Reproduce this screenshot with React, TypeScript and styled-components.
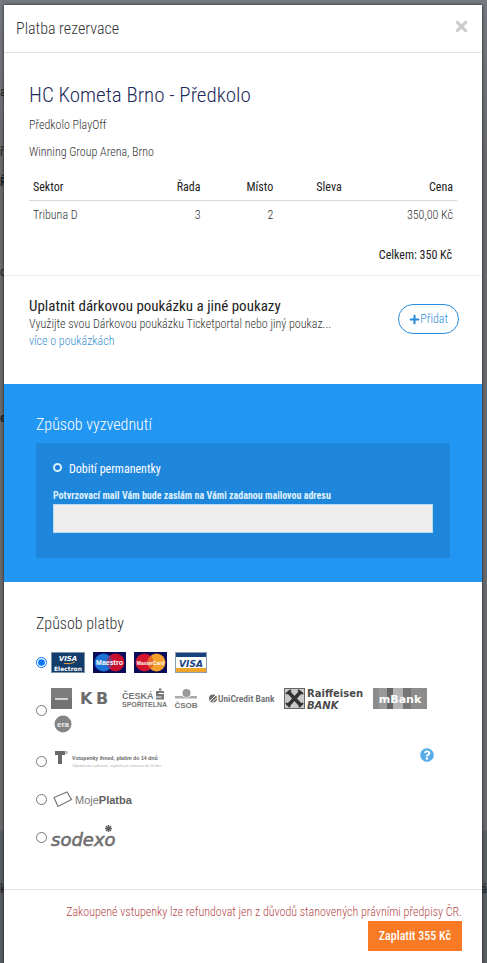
import React from "react";
import styled, { createGlobalStyle } from "styled-components";
import { FaPlus, FaQuestionCircle, FaTimes } from "react-icons/fa";

const GlobalStyle = createGlobalStyle`
  *, *::before, *::after { box-sizing: border-box; }
  body {
    margin: 0;
    background: #6c7077;
    color: #333;
    font-family: "Roboto Condensed", Roboto, "Liberation Sans", sans-serif;
    font-size: 12px;
    font-weight: 300;
    line-height: 18px;
  }
  h1, h2, h3, p, ul { margin: 0; padding: 0; font-weight: inherit; }
  button, input { font: inherit; }
`;

const Page = styled.div`
  position: relative;
  min-height: 100vh;
  padding: 5px 5px 1px 4px;
  overflow: hidden;
  background: linear-gradient(#757980 0, #686a6d 160px, #686a6d 830px, #585d62 832px, #585d62 100%);
`;

const Behind = styled.span<{ $top: number; $side: "left" | "right"; $bold?: boolean }>`
  position: absolute;
  top: ${(p) => p.$top}px;
  ${(p) => p.$side}: 0;
  color: #20242a;
  font-weight: ${(p) => (p.$bold ? 700 : 400)};
`;

const Dialog = styled.section`
  position: relative;
  background: #fff;
  box-shadow: 0 0 3px rgba(0, 0, 0, 0.75);
`;

const Header = styled.header`
  display: flex;
  align-items: center;
  justify-content: space-between;
  height: 48px;
  padding: 0 12px 0 12px;
  border-bottom: 1px solid #e2e2e2;
`;

const DialogTitle = styled.h1`
  font-size: 16px;
  line-height: 24px;
`;

const CloseButton = styled.button`
  display: flex;
  padding: 0;
  border: 0;
  background: none;
  color: #ccc;
  font-size: 17px;
  margin-bottom: 4px;
`;

const Order = styled.div`
  padding: 28px 25px 11px;
  border-bottom: 1px solid #e9eef3;
`;

const EventTitle = styled.h2`
  color: #1d2a5b;
  font-size: 21px;
  line-height: 28px;
  margin-bottom: 7px;
`;

const EventLine = styled.p`
  margin-bottom: 9px;
`;

const Seats = styled.table`
  width: 100%;
  margin-top: 17px;
  border-collapse: collapse;
  table-layout: fixed;
`;

const Head = styled.th<{ $w: number; $left?: boolean }>`
  width: ${(p) => p.$w}%;
  padding: 0 4px 4px;
  border-bottom: 1px solid #d5d9dd;
  color: #222;
  font-weight: 400;
  text-align: ${(p) => (p.$left ? "left" : "right")};
`;

const Cell = styled.td<{ $left?: boolean }>`
  padding: 5px 4px;
  text-align: ${(p) => (p.$left ? "left" : "right")};
`;

const Total = styled.p`
  margin-top: 17px;
  padding-right: 5px;
  color: #222;
  font-weight: 400;
  text-align: right;
`;

const Voucher = styled.div`
  display: flex;
  align-items: flex-start;
  justify-content: space-between;
  padding: 21px 23px 34px 25px;
  line-height: 17px;
`;

const VoucherTitle = styled.h3`
  color: #222;
  font-size: 15px;
  font-weight: 400;
  line-height: 19px;
`;

const MoreLink = styled.a`
  color: #3b8fd0;
  text-decoration: none;
`;

const AddButton = styled.button`
  display: flex;
  align-items: center;
  flex-shrink: 0;
  height: 30px;
  margin-top: 7px;
  padding: 0 10px;
  border: 1px solid #2a8cdc;
  border-radius: 15px;
  background: #fff;
  color: #2a8cdc;
`;

const Pickup = styled.div`
  padding: 29px 32px 24px;
  background: #2196f3;
  color: #fff;
`;

const SectionTitle = styled.h2`
  font-size: 16px;
  line-height: 24px;
`;

const PickupBox = styled.div`
  margin-top: 6px;
  padding: 17px 17px 25px;
  background: #1f87db;
`;

const PickupOption = styled.label`
  display: flex;
  align-items: center;
  gap: 7px;
  font-weight: 400;
`;

const RingRadio = styled.input`
  appearance: none;
  width: 9px;
  height: 9px;
  margin: 0 0 3px;
  border: 2px solid #d8f2ff;
  border-radius: 50%;
  background: #1976e0;
`;

const MailLabel = styled.label`
  display: block;
  margin-top: 11px;
  font-size: 10px;
  font-weight: 700;
  line-height: 14px;
  color: #dff1ff;
`;

const MailInput = styled.input`
  display: block;
  width: 100%;
  height: 29px;
  margin-top: 1px;
  padding: 0 8px;
  border: 1px solid #b9dcf6;
  border-radius: 0;
  background: #eee;
`;

const Payment = styled.div`
  padding: 30px 32px 40px;
`;

const Methods = styled.ul`
  display: grid;
  gap: 15px;
  margin-top: 16px;
  list-style: none;
`;

const Method = styled.li`
  display: flex;
  align-items: center;
  min-height: 21px;
`;

const MethodRadio = styled.input`
  flex-shrink: 0;
  width: 11px;
  height: 11px;
  margin: 0 4px 0 0;
`;

const Logos = styled.label`
  display: flex;
  flex: 1;
  flex-wrap: wrap;
  gap: 6px 8px;

  svg {
    display: block;
    overflow: visible;
  }
`;

const HelpButton = styled.button`
  display: flex;
  margin: 0 16px 12px 0;
  padding: 0;
  border: 0;
  background: none;
  color: #56ace9;
  font-size: 14px;
`;

const Footer = styled.footer`
  display: flex;
  flex-direction: column;
  align-items: flex-end;
  padding: 13px 20px 12px;
  border-top: 1px solid #e2e2e2;
`;

const Notice = styled.p`
  color: #b5484a;
`;

const PayButton = styled.button`
  height: 30px;
  padding: 0 11px;
  border: 0;
  background: #f97a24;
  color: #fff;
  font-weight: 500;
`;

const sans = "Liberation Sans, sans-serif";
const heavy = "DejaVu Sans, sans-serif";

const VisaElectron = () => (
  <svg width="34" height="21" role="img" aria-label="Visa Electron">
    <rect x=".5" y=".5" width="33" height="20" fill="#123d6b" stroke="#7990a5" />
    <text x="17" y="9" textAnchor="middle" fontFamily={heavy} fontSize="7" fontWeight="700" fontStyle="italic" fill="#fff">VISA</text>
    <path d="M13 11.5q7 1 11-1.5" stroke="#e5a43c" fill="none" />
    <text x="17" y="18.500" textAnchor="middle" fontFamily={heavy} fontSize="6" fontWeight="700" fill="#fff">Electron</text>
  </svg>
);

const Circles = ({ name, left, right, size }: { name: string; left: string; right: string; size: number }) => (
  <svg width="33" height="21" role="img" aria-label={name}>
    <rect width="33" height="21" fill="#0b0b5c" />
    <circle cx="22.500" cy="10.500" r="9" fill={right} />
    <circle cx="10.500" cy="10.500" r="9" fill={left} />
    <path d="M16.500 3.800a9 9 0 0 1 0 13.400a9 9 0 0 1 0-13.400" fill={right} opacity=".6" />
    <text x="16.500" y="13" textAnchor="middle" fontFamily={sans} fontSize={size} fontWeight="700" fill="#fff">{name}</text>
  </svg>
);

const Visa = () => (
  <svg width="32" height="21" role="img" aria-label="Visa">
    <rect x=".5" y=".5" width="31" height="20" fill="#fff" stroke="#8e9bb0" />
    <rect x="1" y="1" width="30" height="4" fill="#17427f" />
    <rect x="1" y="16" width="30" height="4" fill="#efa42c" />
    <text x="16" y="14.500" textAnchor="middle" fontFamily={heavy} fontSize="9" fontWeight="700" fontStyle="italic" fill="#17427f">VISA</text>
  </svg>
);

const SquareBank = () => (
  <svg width="21" height="21" role="img" aria-label="Komerční banka">
    <rect width="21" height="21" fill="#737373" />
    <rect width="21" height="10" fill="#7d7d7d" />
    <rect x="4" y="10" width="13" height="2" fill="#d4d4d4" />
  </svg>
);

const Kb = () => (
  <svg width="31" height="21">
    <text x="0" y="16" fontFamily={heavy} fontSize="16" fontWeight="700" fill="#6b6b6b">K</text>
    <text x="16" y="16" fontFamily={heavy} fontSize="16" fontWeight="700" fill="#6b6b6b">B</text>
  </svg>
);

const Sporitelna = () => (
  <svg width="47" height="21" fill="#777">
    <text x="3" y="11" fontFamily={sans} fontSize="9" fontWeight="700">ČESKÁ</text>
    <text x="3" y="19" fontFamily={sans} fontSize="7" fontWeight="700">SPOŘITELNA</text>
    <path d="M37.500 3h7.500v2h-5.500v1h5.500v5.500h-8V9.500h5.500V8.500h-5.500V3zM40 .5h2.500v2H40z" />
  </svg>
);

const Csob = () => (
  <svg width="24" height="21" fill="#777">
    <circle cx="12.500" cy="5" r="4" fill="#999" />
    <path d="M1 8h7q4.500 3 9 0h6v2.500H1z" fill="#aaa" />
    <text x="12" y="19.500" textAnchor="middle" fontFamily={sans} fontSize="8" fontWeight="700">ČSOB</text>
  </svg>
);

const UniCredit = () => (
  <svg width="70" height="21" fill="#707070">
    <circle cx="7" cy="10.500" r="4" />
    <path d="M4 13L10.500 6.500M6 14.500L11 9.500" stroke="#fff" />
    <text x="12" y="14" fontFamily="Roboto Condensed, sans-serif" fontSize="9.500" fontWeight="600">UniCredit Bank</text>
  </svg>
);

const Raiffeisen = () => (
  <svg width="79" height="21" fill="#4a4a4a">
    <rect x=".5" y=".5" width="20" height="20" fill="#c9c9c9" stroke="#666" />
    <path d="M4 3.500L17 17.500M17 3.500L4 17.500" stroke="#333" strokeWidth="3.500" />
    <path d="M2 6l5-4M19 6l-5-4M2 15l4 4M19 15l-4 4" stroke="#333" strokeWidth="2" />
    <text x="23" y="9" fontFamily={heavy} fontSize="10" fontWeight="700">Raiffeisen</text>
    <text x="23" y="20.500" fontFamily={heavy} fontSize="10" fontWeight="700" fontStyle="italic">BANK</text>
  </svg>
);

const MBank = () => (
  <svg width="56" height="21">
    <rect x="2" width="54" height="21" fill="#8c8c8c" />
    <rect x="8" width="8" height="21" fill="#999" />
    <rect x="16" width="6" height="21" fill="#666" />
    <rect x="22" width="10" height="21" fill="#b3b3b3" />
    <rect x="32" width="8" height="21" fill="#767676" />
    <text x="29" y="15" textAnchor="middle" fontFamily={heavy} fontSize="11" fontWeight="700" fill="#fff">mBank</text>
  </svg>
);

const Era = () => (
  <svg width="21" height="18">
    <circle cx="12" cy="9" r="8.500" fill="#858585" />
    <text x="12" y="12" textAnchor="middle" fontFamily={sans} fontSize="8" fontWeight="700" fill="#eee">era</text>
  </svg>
);

const Ticketportal = () => (
  <svg width="112" height="24">
    <path d="M4 2h10v4h-3v9H7V6H4z" fill="#6a6a6a" />
    <path d="M14.500 2h2v3h-2z" fill="#aaa" />
    <text x="21" y="11" fontFamily={sans} fontSize="5.200" fontWeight="700" fill="#666">Vstupenky ihned, platím do 14 dnů</text>
    <text x="21" y="18" fontFamily={sans} fontSize="3.600" fill="#b0b0b0">Objednávka a převzetí, zaplatíte po rezervaci do 14 dnů</text>
  </svg>
);

const MojePlatba = () => (
  <svg width="84" height="21">
    <path d="M3 8.500l13-5.500 4.500 7.500L7 17.500z" fill="none" stroke="#777" strokeWidth="1.200" />
    <text x="24" y="15" fontFamily={sans} fontSize="11" fill="#777">
      Moje<tspan fontWeight="700" fill="#606060">Platba</tspan>
    </text>
  </svg>
);

const Sodexo = () => (
  <svg width="68" height="24">
    <text x="0" y="21" fontFamily={heavy} fontSize="18" fontStyle="italic" fill="#707070" stroke="#707070" strokeWidth=".6">sodexo</text>
    <path d="M57.500 0v7M54 3.500h7M55 1l5 5M60 1l-5 5" stroke="#606060" strokeWidth="1.400" />
  </svg>
);

const columns = [
  { name: "Sektor", width: 24 },
  { name: "Řada", width: 17 },
  { name: "Místo", width: 17 },
  { name: "Sleva", width: 16 },
  { name: "Cena", width: 26 },
];
const seat = ["Tribuna D", "3", "2", "", "350,00 Kč"];

export default function App() {
  return (
    <Page>
      <GlobalStyle />
      <div aria-hidden="true">
        <Behind $side="left" $top={83}>a</Behind>
        <Behind $side="left" $top={143}>ř</Behind>
        <Behind $side="left" $top={173} $bold>Ř</Behind>
        <Behind $side="left" $top={263}>o</Behind>
        <Behind $side="left" $top={409} $bold>e</Behind>
        <Behind $side="left" $top={880}>k</Behind>
        <Behind $side="right" $top={880}>á</Behind>
      </div>
      <Dialog role="dialog" aria-labelledby="dialog-title">
        <Header>
          <DialogTitle id="dialog-title">Platba rezervace</DialogTitle>
          <CloseButton type="button" aria-label="Zavřít"><FaTimes /></CloseButton>
        </Header>

        <Order>
          <EventTitle>HC Kometa Brno - Předkolo</EventTitle>
          <EventLine>Předkolo PlayOff</EventLine>
          <EventLine>Winning Group Arena, Brno</EventLine>
          <Seats>
            <thead>
              <tr>
                {columns.map((c, i) => (
                  <Head key={c.name} scope="col" $w={c.width} $left={i === 0}>{c.name}</Head>
                ))}
              </tr>
            </thead>
            <tbody>
              <tr>
                {seat.map((value, i) => (
                  <Cell key={columns[i].name} $left={i === 0}>{value}</Cell>
                ))}
              </tr>
            </tbody>
          </Seats>
          <Total>Celkem: 350 Kč</Total>
        </Order>

        <Voucher>
          <div>
            <VoucherTitle>Uplatnit dárkovou poukázku a jiné poukazy</VoucherTitle>
            <p>Využijte svou Dárkovou poukázku Ticketportal nebo jiný poukaz...</p>
            <MoreLink href="#poukazky">více o poukázkách</MoreLink>
          </div>
          <AddButton type="button"><FaPlus size={11} />Přidat</AddButton>
        </Voucher>

        <Pickup>
          <SectionTitle>Způsob vyzvednutí</SectionTitle>
          <PickupBox>
            <PickupOption>
              <RingRadio type="radio" name="pickup" />
              Dobití permanentky
            </PickupOption>
            <MailLabel htmlFor="mail">Potvrzovací mail Vám bude zaslám na Vámi zadanou mailovou adresu</MailLabel>
            <MailInput id="mail" type="email" />
          </PickupBox>
        </Pickup>

        <Payment>
          <SectionTitle>Způsob platby</SectionTitle>
          <Methods>
            <Method>
              <MethodRadio id="pay-card" type="radio" name="payment" defaultChecked />
              <Logos htmlFor="pay-card">
                <VisaElectron />
                <Circles name="Maestro" size={7} left="#1c74d8" right="#c8102e" />
                <Circles name="MasterCard" size={5} left="#d2152c" right="#f3a02c" />
                <Visa />
              </Logos>
            </Method>
            <Method>
              <MethodRadio id="pay-bank" type="radio" name="payment" />
              <Logos htmlFor="pay-bank">
                <SquareBank />
                <Kb />
                <Sporitelna />
                <Csob />
                <UniCredit />
                <Raiffeisen />
                <MBank />
                <Era />
              </Logos>
            </Method>
            <Method>
              <MethodRadio id="pay-later" type="radio" name="payment" />
              <Logos htmlFor="pay-later"><Ticketportal /></Logos>
              <HelpButton type="button" aria-label="Nápověda"><FaQuestionCircle /></HelpButton>
            </Method>
            <Method>
              <MethodRadio id="pay-moje" type="radio" name="payment" />
              <Logos htmlFor="pay-moje"><MojePlatba /></Logos>
            </Method>
            <Method>
              <MethodRadio id="pay-sodexo" type="radio" name="payment" />
              <Logos htmlFor="pay-sodexo"><Sodexo /></Logos>
            </Method>
          </Methods>
        </Payment>

        <Footer>
          <Notice>Zakoupené vstupenky lze refundovat jen z důvodů stanovených právními předpisy ČR.</Notice>
          <PayButton type="button">Zaplatit 355 Kč</PayButton>
        </Footer>
      </Dialog>
    </Page>
  );
}
